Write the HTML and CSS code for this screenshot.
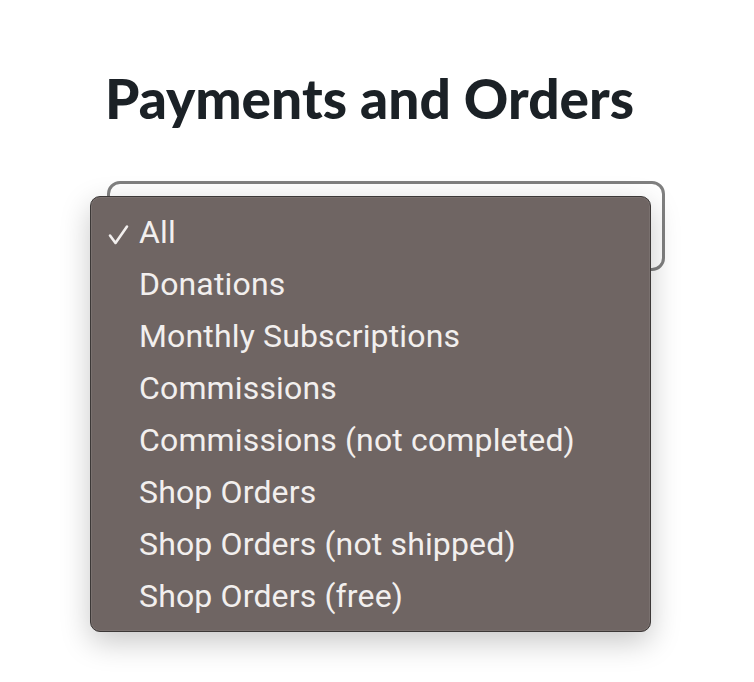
FILE: index.html
```html
<!DOCTYPE html>
<html>
<head>
<meta charset="utf-8">
<link rel="stylesheet" href="styles.css">
</head>
<body>
<main class="page">
  <h1 class="title">Payments and Orders</h1>
  <div class="select-wrap">
    <div class="select"></div>
    <ul class="menu">
      <li class="item selected"><svg class="check" width="22" height="22" viewBox="0 0 22 22"><path d="M2 11.5 L7.5 19 L19 2.5" fill="none" stroke="#f2efee" stroke-width="2.6" stroke-linecap="round" stroke-linejoin="round"/></svg>All</li>
      <li class="item">Donations</li>
      <li class="item">Monthly Subscriptions</li>
      <li class="item">Commissions</li>
      <li class="item">Commissions (not completed)</li>
      <li class="item">Shop Orders</li>
      <li class="item">Shop Orders (not shipped)</li>
      <li class="item">Shop Orders (free)</li>
    </ul>
  </div>
</main>
</body>
</html>
```
FILE: styles.css
```css
html, body {
  margin: 0;
  padding: 0;
  background: #ffffff;
}
.page {
  width: 754px;
  height: 682px;
  padding-top: 68px;
  box-sizing: border-box;
}
.title {
  margin: 0 0 0 105px;
  font-family: "Lato", sans-serif;
  font-weight: 900;
  font-size: 55px;
  line-height: 60px;
  color: #1b2126;
}
.select-wrap {
  position: relative;
  margin: 53px 0 0 107px;
  width: 558px;
}
.select {
  height: 90px;
  box-sizing: border-box;
  border: 3px solid #808080;
  border-radius: 13px;
  background: #fff;
}
.menu {
  position: absolute;
  left: -17px;
  top: 15px;
  width: 561px;
  height: 436px;
  box-sizing: border-box;
  margin: 0;
  padding: 9px 0 0 0;
  list-style: none;
  background: #6f6563;
  border: 1px solid #3c3837;
  border-radius: 10px;
  box-shadow: 0 10px 30px rgba(0,0,0,0.22), 0 0 0 1px rgba(255,255,255,0.08) inset;
}
.item {
  position: relative;
  height: 52px;
  line-height: 52px;
  padding-left: 48px;
  font-family: "Roboto", sans-serif;
  font-size: 32px;
  letter-spacing: 0.15px;
  color: #f2efee;
  white-space: nowrap;
}
.check {
  position: absolute;
  left: 17px;
  top: 18px;
}
```
